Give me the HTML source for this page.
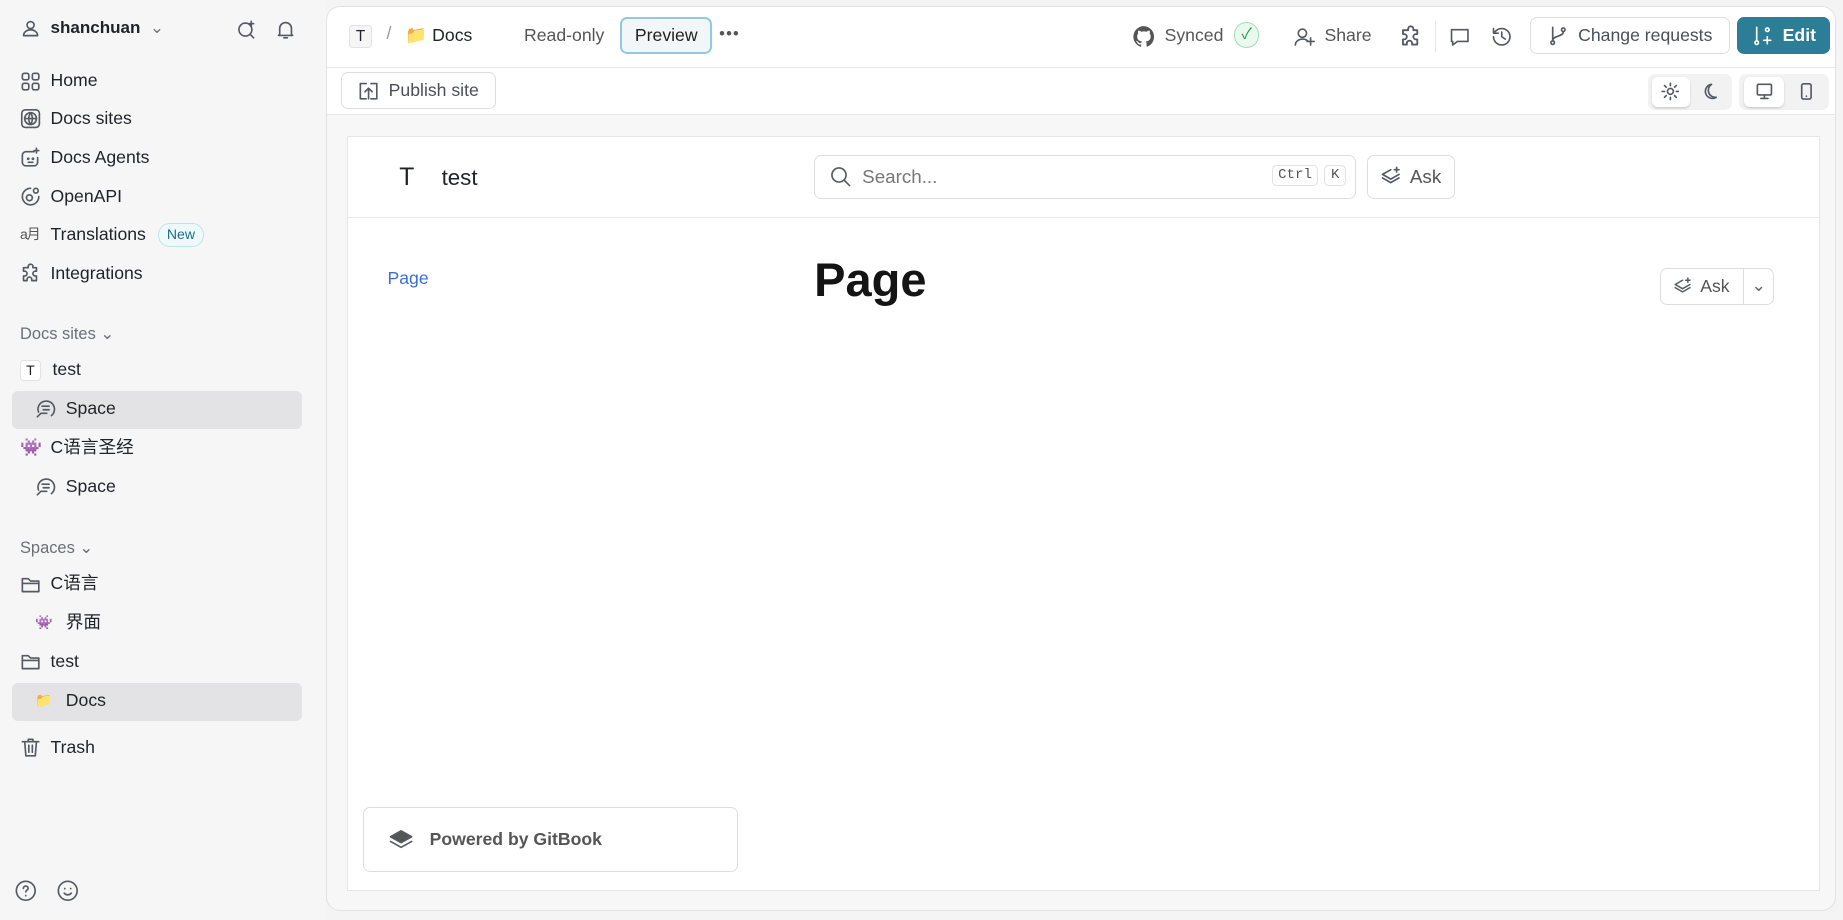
<!DOCTYPE html>
<html><head><meta charset="utf-8"><style>
html,body{margin:0;padding:0}
body{width:1568px;height:783px;zoom:1.17538;background:#f4f4f5;font-family:"Liberation Sans","Noto Sans CJK SC",sans-serif;color:#1f2328;position:relative;overflow:hidden}
.a{position:absolute}
.sb{left:0;top:0;width:277px;height:783px;background:#f6f6f7}
.it{position:absolute;left:17px;font-size:15px;display:flex;align-items:center;gap:8px;height:20px;line-height:20px;white-space:nowrap}
.ic{width:18px;height:18px;display:inline-block}
.lbl{position:absolute;left:17px;font-size:14px;color:#6b6f76}
.sel{position:absolute;left:10px;width:247px;height:32px;background:#e3e3e6;border-radius:5px}
svg{fill:none;stroke:#555a62;stroke-width:1.4;stroke-linecap:round;stroke-linejoin:round}
.main{left:277px;top:5px;width:1285px;height:770px;background:#f7f7f7;border:1px solid #e2e2e4;border-radius:12px;overflow:hidden;box-sizing:border-box}
.btn{position:absolute;border:1px solid #dcdde0;border-radius:6px;background:#fff;box-sizing:border-box;display:flex;align-items:center;font-size:15px;color:#4a4f57}
</style></head><body>
<div class="a sb"></div>
<div class="it" style="top:14px;font-weight:bold;font-size:14.5px"><svg class="ic" viewBox="0 0 18 18"><circle cx="9" cy="6" r="3"/><path d="M3 15c0-3 3-5 6-5s6 2 6 5z"/></svg>shanchuan <span style="font-weight:normal;color:#777">⌄</span></div>
<svg class="a" style="left:201px;top:16px" width="18" height="18" viewBox="0 0 18 18"><circle cx="8" cy="9" r="5.5"/><path d="M12 13l3 3M13 2v4M11 4h4"/></svg>
<svg class="a" style="left:234px;top:16px" width="18" height="18" viewBox="0 0 18 18"><path d="M4 13V8a5 5 0 0110 0v5l1 1H3zM7.5 16h3"/></svg>

<div class="it" style="top:59px"><svg class="ic" viewBox="0 0 18 18"><rect x="2" y="2" width="5.5" height="5.5" rx="1.5"/><rect x="10.5" y="2" width="5.5" height="5.5" rx="1.5"/><rect x="2" y="10.5" width="5.5" height="5.5" rx="1.5"/><rect x="10.5" y="10.5" width="5.5" height="5.5" rx="1.5"/></svg>Home</div>
<div class="it" style="top:91px"><svg class="ic" viewBox="0 0 18 18"><rect x="1.5" y="1.5" width="15" height="15" rx="3"/><circle cx="9" cy="9" r="5"/><path d="M4 9h10M9 4c-2 3-2 7 0 10M9 4c2 3 2 7 0 10"/></svg>Docs sites</div>
<div class="it" style="top:124px"><svg class="ic" viewBox="0 0 18 18"><path d="M12 4H5a3 3 0 00-3 3v6a3 3 0 003 3h7a3 3 0 003-3v-4"/><circle cx="7" cy="10" r=".5"/><circle cx="11" cy="10" r=".5"/><path d="M7 13h4M14 1v4M12 3h4"/></svg>Docs Agents</div>
<div class="it" style="top:157px"><svg class="ic" viewBox="0 0 18 18"><path d="M9 2a7 7 0 107 7"/><circle cx="8" cy="10" r="2.5"/><circle cx="13.5" cy="4" r="2"/></svg>OpenAPI</div>
<div class="it" style="top:190px"><span style="font-size:12px;width:18px;color:#555;letter-spacing:-1px">a月</span>Translations <span style="font-size:12px;color:#1d6e86;border:1px solid #bfe3ec;background:#eef9fc;border-radius:10px;padding:0 7px;line-height:18px;margin-left:2px">New</span></div>
<div class="it" style="top:223px"><svg class="ic" viewBox="0 0 18 18"><path d="M7 3a2 2 0 014 0v1h3v3h-1a2 2 0 000 4h1v4h-4v-1a2 2 0 00-4 0v1H3v-4h1a2 2 0 000-4H3V4h4z"/></svg>Integrations</div>

<div class="lbl" style="top:276px">Docs sites ⌄</div>
<div class="it" style="top:305px"><span style="width:16px;height:16px;border:1px solid #e3e3e3;border-radius:3px;background:#fff;font-size:12px;line-height:16px;text-align:center;margin-right:2px">T</span>test</div>
<div class="sel" style="top:333px"></div>
<div class="it" style="top:338px;left:30px"><svg class="ic" viewBox="0 0 18 18"><path d="M3 12a7 7 0 1111 3M2 16l3-3h5M6 7h6M7 10h5"/></svg>Space</div>
<div class="it" style="top:371px"><span style="width:18px;font-size:15px">👾</span>C语言圣经</div>
<div class="it" style="top:404px;left:30px"><svg class="ic" viewBox="0 0 18 18"><path d="M3 12a7 7 0 1111 3M2 16l3-3h5M6 7h6M7 10h5"/></svg>Space</div>

<div class="lbl" style="top:458px">Spaces ⌄</div>
<div class="it" style="top:487px"><svg class="ic" viewBox="0 0 18 18"><path d="M2 4h5l2 2h7v9H2z"/><path d="M2 8h14"/></svg>C语言</div>
<div class="it" style="top:520px;left:30px"><span style="width:18px;font-size:12px">👾</span>界面</div>
<div class="it" style="top:553px"><svg class="ic" viewBox="0 0 18 18"><path d="M2 4h5l2 2h7v9H2z"/><path d="M2 8h14"/></svg>test</div>
<div class="sel" style="top:581px"></div>
<div class="it" style="top:586px;left:30px"><span style="width:18px;font-size:12px">📁</span>Docs</div>
<div class="it" style="top:626px"><svg class="ic" viewBox="0 0 18 18"><path d="M2 4h14M7 4V2h4v2M4 4l1 12h8l1-12M7.5 7v6M10.5 7v6"/></svg>Trash</div>
<svg class="a" style="left:12px;top:748px" width="20" height="20" viewBox="0 0 20 20"><circle cx="10" cy="10" r="8"/><path d="M8 8a2 2 0 114 0c0 1.5-2 1.5-2 3M10 14v.3"/></svg>
<svg class="a" style="left:48px;top:748px" width="20" height="20" viewBox="0 0 20 20"><circle cx="10" cy="10" r="8"/><path d="M7 12c1.5 2 4.5 2 6 0M7.5 8v.3M12.5 8v.3"/></svg>

<div class="a main">
 <div class="a" style="left:0;top:0;width:1285px;height:51px;background:#fff;border-bottom:1px solid #e8e8ea"></div>
 <div class="a" style="left:0;top:52px;width:1285px;height:39px;background:#fff;border-bottom:1px solid #e8e8ea"></div>
 <div class="a" style="left:19px;top:15px;width:18px;height:18px;border:1px solid #e3e3e3;border-radius:3px;background:#f6f6f6;text-align:center;font-size:13px;line-height:18px">T</div>
 <div class="a" style="left:51px;top:14px;color:#999;font-size:15px">/</div>
 <div class="a" style="left:67px;top:15px;font-size:15px">📁 <span style="color:#1f2328">Docs</span></div>
 <div class="a" style="left:168px;top:15px;font-size:15px;color:#555">Read-only</div>
 <div class="btn" style="left:250px;top:9px;width:78px;height:31px;border:2px solid #8fcbe0;background:#f2f6f8;justify-content:center;color:#222">Preview</div>
 <div class="a" style="left:334px;top:15px;font-size:14px;color:#555;letter-spacing:1px">•••</div>
 <svg class="a" style="left:685px;top:15px" width="20" height="20" viewBox="0 0 20 20"><path style="fill:#555;stroke:none" d="M10 1a9 9 0 00-2.8 17.5c.4.1.6-.2.6-.4v-1.6c-2.5.5-3-1.1-3-1.1-.4-1-1-1.3-1-1.3-.8-.6.1-.6.1-.6.9.1 1.4.9 1.4.9.8 1.4 2.1 1 2.6.8.1-.6.3-1 .6-1.2-2-.2-4.1-1-4.1-4.4 0-1 .3-1.8.9-2.4-.1-.2-.4-1.1.1-2.4 0 0 .8-.2 2.5.9a8.500 8.500 0 014.500 0c1.700-1.100 2.500-.900 2.500-.900.500 1.300.200 2.200.100 2.400.600.600.900 1.400.900 2.400 0 3.400-2.100 4.200-4.100 4.400.300.300.600.800.600 1.600v2.400c0 .200.200.500.600.400A9 9 0 0010 1z"/></svg>
 <div class="a" style="left:713px;top:15px;font-size:15px;color:#555">Synced</div>
 <div class="a" style="left:772px;top:13px;width:20px;height:20px;border-radius:50%;background:#e9f9ee;border:1px solid #9fe0b3;color:#1e9a48;font-size:13px;text-align:center;line-height:20px">✓</div>
 <svg class="a" style="left:822px;top:15px" width="20" height="20" viewBox="0 0 20 20"><circle cx="8" cy="7" r="3.5"/><path d="M2 17c0-3 3-5 6-5s4 1 5 2M15 11v6M12 14h6"/></svg>
 <div class="a" style="left:849px;top:15px;font-size:15px;color:#555">Share</div>
 <svg class="a" style="left:912px;top:15px" width="20" height="20" viewBox="0 0 18 18"><path d="M7 3a2 2 0 014 0v1h3v3h-1a2 2 0 000 4h1v4h-4v-1a2 2 0 00-4 0v1H3v-4h1a2 2 0 000-4H3V4h4z"/></svg>
 <div class="a" style="left:943px;top:12px;width:1px;height:26px;background:#e5e5e5"></div>
 <svg class="a" style="left:954px;top:15px" width="20" height="20" viewBox="0 0 20 20"><path d="M3 4h14v10H8l-4 3v-3H3z"/></svg>
 <svg class="a" style="left:990px;top:15px" width="20" height="20" viewBox="0 0 20 20"><path d="M3 10a7 7 0 107-7 7 7 0 00-5 2L3 7M3 3v4h4M10 6v4l3 2"/></svg>
 <div class="btn" style="left:1024px;top:9px;width:170px;height:31px;padding-left:14px;gap:8px"><svg width="18" height="18" viewBox="0 0 18 18"><circle cx="4" cy="15" r="1.5"/><circle cx="13" cy="4" r="1.5"/><path d="M4 2v11M13 6c0 4-9 3-9 7"/></svg>Change requests</div>
 <div class="btn" style="left:1200px;top:9px;width:79px;height:31px;background:#2b7e95;border-color:#2b7e95;color:#fff;font-weight:bold;padding-left:12px;gap:8px"><svg width="18" height="18" viewBox="0 0 18 18" style="stroke:#fff"><circle cx="4" cy="15" r="1.5"/><circle cx="13" cy="4" r="1.5"/><path d="M4 2v11M13 10v6M10 13h6"/></svg>Edit</div>
 <div class="btn" style="left:12px;top:55px;width:132px;height:32px;padding-left:14px;gap:8px"><svg width="18" height="18" viewBox="0 0 18 18"><path d="M7 3H2v13h5M11 3h5v13h-5M9 16V7M6 10l3-3 3 3"/></svg>Publish site</div>
 <div class="a" style="left:1124px;top:57px;width:72px;height:31px;background:#f2f2f3;border-radius:6px"></div>
 <div class="a" style="left:1128px;top:60px;width:32px;height:25px;background:#fff;border-radius:5px;box-shadow:0 1px 2px rgba(0,0,0,.15)"></div>
 <svg class="a" style="left:1135px;top:64px" width="16" height="16" viewBox="0 0 16 16"><circle cx="8" cy="8" r="2.5"/><path d="M8 1v2M8 13v2M1 8h2M13 8h2M3 3l1.4 1.4M11.6 11.6L13 13M3 13l1.4-1.4M11.6 4.4L13 3"/></svg>
 <svg class="a" style="left:1169px;top:64px" width="16" height="16" viewBox="0 0 16 16"><path d="M9 2a6 6 0 104 11A6 6 0 019 2z"/></svg>
 <div class="a" style="left:1202px;top:57px;width:76px;height:31px;background:#f2f2f3;border-radius:6px"></div>
 <div class="a" style="left:1206px;top:60px;width:34px;height:25px;background:#fff;border-radius:5px;box-shadow:0 1px 2px rgba(0,0,0,.15)"></div>
 <svg class="a" style="left:1215px;top:64px" width="16" height="16" viewBox="0 0 16 16" style="stroke:#222"><rect x="2" y="2" width="12" height="9" rx="1"/><path d="M8 11v3M5 14h6"/></svg>
 <svg class="a" style="left:1251px;top:64px" width="16" height="16" viewBox="0 0 16 16"><rect x="4" y="1.5" width="8" height="13" rx="1.5"/><path d="M8 12v.2"/></svg>

 <div class="a" style="left:17px;top:110px;width:1254px;height:642px;background:#fff;border:1px solid #e6e6e8;box-sizing:border-box">
  <div class="a" style="left:0;top:0;width:1252px;height:68px;border-bottom:1px solid #ececee"></div>
  <div class="a" style="left:44px;top:23px;font-size:21px">T</div>
  <div class="a" style="left:80px;top:24px;font-size:19px">test</div>
  <div class="btn" style="left:397px;top:15px;width:461px;height:38px;padding-left:12px;gap:8px;color:#777"><svg width="20" height="20" viewBox="0 0 20 20"><circle cx="8.5" cy="8.5" r="6"/><path d="M13 13l4.5 4.5"/></svg><span style="font-size:16px">Search...</span>
   <span style="position:absolute;left:389px;top:8px;font-family:'Liberation Mono',monospace;font-size:12px;border:1px solid #e2e2e4;border-radius:4px;padding:1px 4px;color:#555">Ctrl</span>
   <span style="position:absolute;left:433px;top:8px;font-family:'Liberation Mono',monospace;font-size:12px;border:1px solid #e2e2e4;border-radius:4px;padding:1px 5px;color:#555">K</span></div>
  <div class="btn" style="left:867px;top:15px;width:75px;height:38px;padding-left:10px;gap:6px;color:#555"><svg width="20" height="20" viewBox="0 0 20 20"><path d="M10 4L3 8l7 4 7-4M3 11l7 4 7-4M15 2v4M13 4h4"/></svg><span style="font-size:16px">Ask</span></div>
  <div class="a" style="left:34px;top:111px;font-size:15px;color:#3b6fd4">Page</div>
  <div class="a" style="left:397px;top:98px;font-size:40px;font-weight:bold;color:#141414">Page</div>
  <div class="btn" style="left:1117px;top:111px;width:97px;height:32px;padding-left:9px;gap:6px;color:#555"><svg width="18" height="18" viewBox="0 0 20 20"><path d="M10 4L3 8l7 4 7-4M3 11l7 4 7-4M15 2v4M13 4h4"/></svg>Ask<span style="position:absolute;left:69px;top:0;height:30px;border-left:1px solid #dcdde0;width:26px;text-align:center;line-height:28px;color:#666">⌄</span></div>
  <div class="btn" style="left:13px;top:570px;width:319px;height:55px;padding-left:20px;gap:12px;font-weight:bold;color:#555"><svg width="24" height="24" viewBox="0 0 24 24"><path style="fill:#555" d="M12 5L3 10l9 5 9-5z"/><path d="M3 14l9 5 9-5"/></svg>Powered by GitBook</div>
 </div>
</div>
</body></html>
